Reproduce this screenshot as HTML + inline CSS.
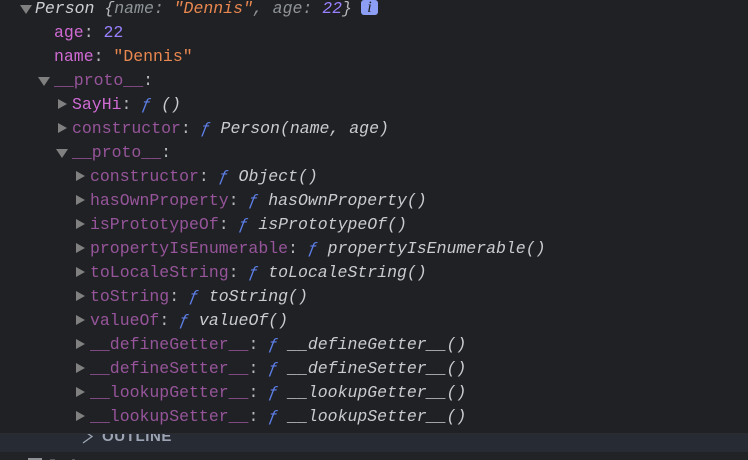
<!DOCTYPE html>
<html><head><meta charset="utf-8">
<style>
html,body{margin:0;padding:0;background:#202124;width:748px;height:460px;overflow:hidden}
.r{position:absolute;height:24px;line-height:24px;white-space:pre;font-family:"Liberation Mono",monospace;font-size:16.5px;color:#9aa0a6}
.t{position:absolute;width:0;height:0}
.tr{border-top:5.5px solid transparent;border-bottom:5.5px solid transparent;border-left:9px solid #808080}
.td{border-left:6px solid transparent;border-right:6px solid transparent;border-top:9px solid #808080}
.k{color:#cf6ad3}.d{color:#96559a}.n{color:#9980ff}.s{color:#e8874f}.f{color:#5c7ee6;font-style:italic}
.v{color:#c9cbce;font-style:italic}.g{color:#8f9499;font-style:italic}.c{color:#b5b8bc}
</style></head><body>
<div class="t td" style="left:20px;top:5px"></div>
<div class="r" style="left:35px;top:-3px;font-style:italic"><span style="color:#cdcfd2">Person</span> <span class="c">{</span><span class="g">name: </span><span class="s">"Dennis"</span><span class="g">, age: </span><span class="n">22</span><span class="c">}</span></div>
<div style="position:absolute;left:361px;top:0;width:17px;height:15px;background:#8c9ff5;border-radius:3px;color:#202124;font:italic 16px/15px 'Liberation Serif',serif;text-align:center">i</div>
<div class="r" style="left:54px;top:21px"><span class="k">age</span><span class="c">: </span><span class="n">22</span></div>
<div class="r" style="left:54px;top:45px"><span class="k">name</span><span class="c">: </span><span class="s">"Dennis"</span></div>
<div class="t td" style="left:38px;top:77px"></div>
<div class="r" style="left:54px;top:69px"><span class="d">__proto__</span><span class="c">:</span></div>
<div class="t tr" style="left:58px;top:99px"></div>
<div class="r" style="left:72px;top:93px"><span class="k">SayHi</span><span class="c">: </span><span class="f">ƒ</span><span class="v"> ()</span></div>
<div class="t tr" style="left:58px;top:123px"></div>
<div class="r" style="left:72px;top:117px"><span class="d">constructor</span><span class="c">: </span><span class="f">ƒ</span><span class="v"> Person(name, age)</span></div>
<div class="t td" style="left:56px;top:149px"></div>
<div class="r" style="left:72px;top:141px"><span class="d">__proto__</span><span class="c">:</span></div>
<div class="t tr" style="left:76px;top:171px"></div>
<div class="r" style="left:90px;top:165px"><span class="d">constructor</span><span class="c">: </span><span class="f">ƒ</span><span class="v"> Object()</span></div>
<div class="t tr" style="left:76px;top:195px"></div>
<div class="r" style="left:90px;top:189px"><span class="d">hasOwnProperty</span><span class="c">: </span><span class="f">ƒ</span><span class="v"> hasOwnProperty()</span></div>
<div class="t tr" style="left:76px;top:219px"></div>
<div class="r" style="left:90px;top:213px"><span class="d">isPrototypeOf</span><span class="c">: </span><span class="f">ƒ</span><span class="v"> isPrototypeOf()</span></div>
<div class="t tr" style="left:76px;top:243px"></div>
<div class="r" style="left:90px;top:237px"><span class="d">propertyIsEnumerable</span><span class="c">: </span><span class="f">ƒ</span><span class="v"> propertyIsEnumerable()</span></div>
<div class="t tr" style="left:76px;top:267px"></div>
<div class="r" style="left:90px;top:261px"><span class="d">toLocaleString</span><span class="c">: </span><span class="f">ƒ</span><span class="v"> toLocaleString()</span></div>
<div class="t tr" style="left:76px;top:291px"></div>
<div class="r" style="left:90px;top:285px"><span class="d">toString</span><span class="c">: </span><span class="f">ƒ</span><span class="v"> toString()</span></div>
<div class="t tr" style="left:76px;top:315px"></div>
<div class="r" style="left:90px;top:309px"><span class="d">valueOf</span><span class="c">: </span><span class="f">ƒ</span><span class="v"> valueOf()</span></div>
<div class="t tr" style="left:76px;top:339px"></div>
<div class="r" style="left:90px;top:333px"><span class="d">__defineGetter__</span><span class="c">: </span><span class="f">ƒ</span><span class="v"> __defineGetter__()</span></div>
<div class="t tr" style="left:76px;top:363px"></div>
<div class="r" style="left:90px;top:357px"><span class="d">__defineSetter__</span><span class="c">: </span><span class="f">ƒ</span><span class="v"> __defineSetter__()</span></div>
<div class="t tr" style="left:76px;top:387px"></div>
<div class="r" style="left:90px;top:381px"><span class="d">__lookupGetter__</span><span class="c">: </span><span class="f">ƒ</span><span class="v"> __lookupGetter__()</span></div>
<div class="t tr" style="left:76px;top:411px"></div>
<div class="r" style="left:90px;top:405px"><span class="d">__lookupSetter__</span><span class="c">: </span><span class="f">ƒ</span><span class="v"> __lookupSetter__()</span></div>
<div style="position:absolute;left:0;top:433px;width:748px;height:19px;background:#272b33;border-top:1px solid #2a2c2f;box-sizing:border-box;overflow:hidden">
<svg style="position:absolute;left:80px;top:0" width="16" height="12"><path d="M4 -3 L12 2.5 L3 9" fill="none" stroke="#9da5b4" stroke-width="1.3"/></svg>
<div style="position:absolute;left:102px;top:-6px;font:bold 15px/18px 'Liberation Sans',sans-serif;color:#9da5b4;letter-spacing:.6px">OUTLINE</div>
</div>
<div style="position:absolute;left:0;top:452px;width:748px;height:8px;background:#212327"></div>
<div style="position:absolute;left:28px;top:458px;width:14px;height:2px;background:#8f9297"></div>
<div style="position:absolute;left:50px;top:459px;width:5px;height:1px;background:#55585c"></div>
<div style="position:absolute;left:72px;top:459px;width:3px;height:1px;background:#55585c"></div>
</body></html>
